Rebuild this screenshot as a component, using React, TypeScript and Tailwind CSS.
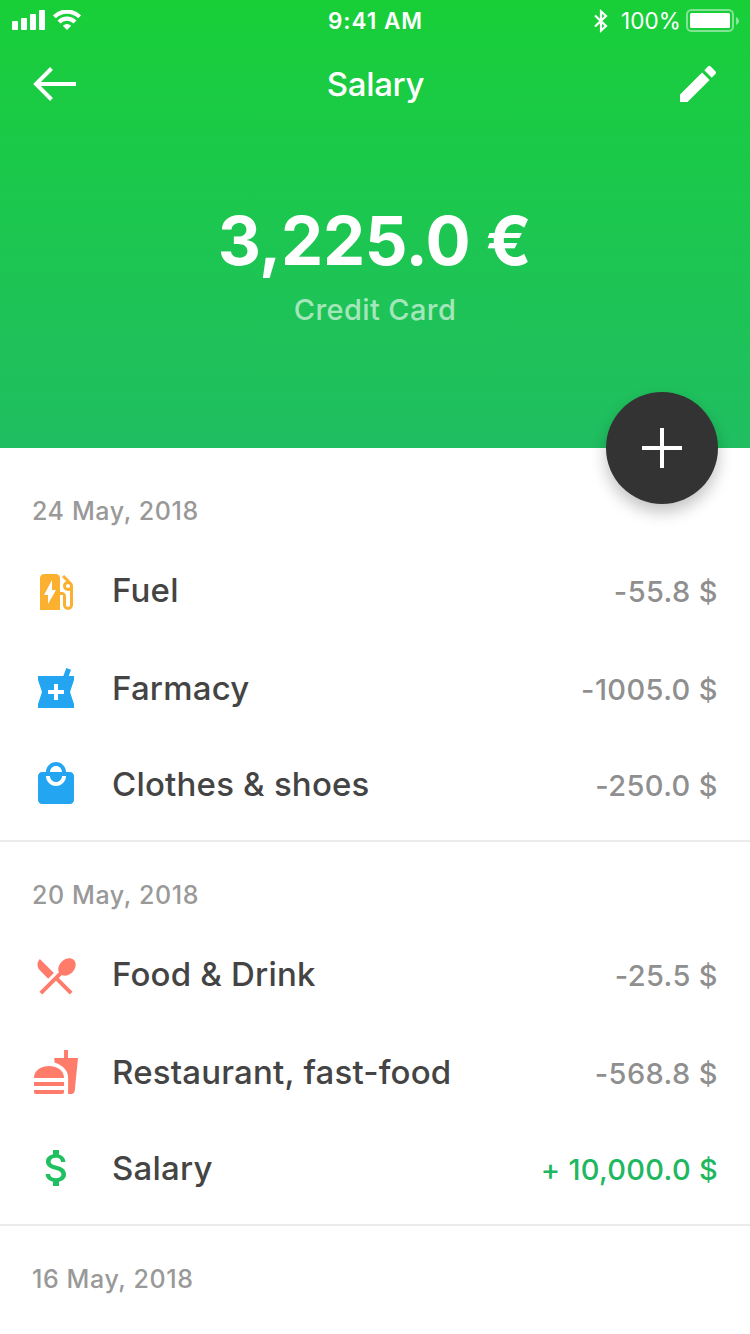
import type { ReactNode } from 'react';
import {
  MdAttachMoney,
  MdEdit,
  MdEvStation,
  MdFastfood,
  MdLocalMall,
  MdLocalPharmacy,
  MdRestaurantMenu,
} from 'react-icons/md';
import clsx from 'clsx';

interface Transaction {
  label: string;
  amount: string;
  icon: ReactNode;
  color: string;
  income?: boolean;
}

interface DayGroup {
  date: string;
  items: Transaction[];
}

const groups: DayGroup[] = [
  {
    date: '24 May, 2018',
    items: [
      { label: 'Fuel', amount: '-55.8 $', icon: <MdEvStation size={48} />, color: 'text-[#fbb12f]' },
      { label: 'Farmacy', amount: '-1005.0 $', icon: <MdLocalPharmacy size={48} className="mt-1" />, color: 'text-[#23a5f1]' },
      { label: 'Clothes & shoes', amount: '-250.0 $', icon: <MdLocalMall size={48} />, color: 'text-[#23a5f1]' },
    ],
  },
  {
    date: '20 May, 2018',
    items: [
      { label: 'Food & Drink', amount: '-25.5 $', icon: <MdRestaurantMenu size={48} />, color: 'text-[#ff7c6b]' },
      { label: 'Restaurant, fast-food', amount: '-568.8 $', icon: <MdFastfood size={48} />, color: 'text-[#ff7c6b]' },
      { label: 'Salary', amount: '+ 10,000.0 $', icon: <MdAttachMoney size={48} className="ml-px" />, color: 'text-[#20c062]', income: true },
    ],
  },
  { date: '16 May, 2018', items: [] },
];

function StatusBar() {
  return (
    <div className="grid h-[41px] grid-cols-3 items-center pl-3 pr-[11px]">
      <div className="mb-[2px] flex items-center gap-[7px]">
        <svg width="34" height="20" viewBox="0 0 34 20" fill="currentColor">
          <rect x="0" y="11" width="6" height="9" rx="1" />
          <rect x="9" y="8" width="6" height="12" rx="1" />
          <rect x="18" y="4" width="6" height="16" rx="1" />
          <rect x="27" y="0" width="6" height="20" rx="1" />
        </svg>
        <svg width="28" height="20" viewBox="0 0 28 20" fill="none" stroke="currentColor" strokeWidth="4.2">
          <path d="M1.4 6.8a17.8 17.8 0 0 1 25.2 0" />
          <path d="M6 12a11.3 11.3 0 0 1 16 0" />
          <path d="M14 20l-4.2-4.3a6 6 0 0 1 8.4 0z" fill="currentColor" stroke="none" />
        </svg>
      </div>
      <span className="text-center text-[22.5px] font-semibold tracking-[1px]">9:41 AM</span>
      <div className="flex items-center justify-end">
        <svg className="mr-3" width="16" height="24" viewBox="0 0 16 24" fill="none" stroke="currentColor" strokeWidth="2.2">
          <path d="M2 6.500l11 10.500L8 21.500v-19L13 7 2 17.500" />
        </svg>
        <span className="mr-[5px] mt-px text-[22.5px] tracking-[0.1px]">100%</span>
        <svg width="53" height="24" viewBox="0 0 53 24">
          <rect x="1" y="1" width="46" height="21" rx="4.500" fill="none" stroke="currentColor" strokeWidth="2" opacity="0.45" />
          <rect x="4" y="4" width="40" height="15" rx="1.500" fill="currentColor" />
          <path d="M50 8c4 1.500 4 6.500 0 8z" fill="currentColor" opacity="0.5" />
        </svg>
      </div>
    </div>
  );
}

function Header() {
  return (
    <header className="relative h-[448px] bg-linear-to-b from-[#18cf37] to-[#20be61] text-white">
      <StatusBar />
      <nav className="flex h-[86px] items-center justify-between pl-8 pr-7">
        <svg width="48" height="48" viewBox="0 0 48 48" fill="none" stroke="currentColor" strokeWidth="4">
          <path d="M44 24H4M19.500 8.500L4 24l15.500 15.500" />
        </svg>
        <h1 className="mt-[2px] mr-[3px] text-[33px] font-medium tracking-[-0.3px]">Salary</h1>
        <MdEdit size={48} />
      </nav>

      <div className="flex flex-col items-center pt-[74px]">
        <div className="mr-px text-[67px] leading-[80px] font-bold tracking-[-0.4px]">3,225.0 €</div>
        <div className="mt-[11px] text-[29px] leading-[36px] font-medium tracking-[0.4px] text-white/60">Credit Card</div>
      </div>

      {/* floating add button, straddles the header edge */}
      <button className="absolute right-8 -bottom-14 flex size-28 items-center justify-center rounded-full bg-[#333333] shadow-[0_8px_16px_rgba(0,0,0,0.24)]">
        <svg width="40" height="40" viewBox="0 0 40 40" stroke="currentColor" strokeWidth="4">
          <path d="M20 0v40M0 20h40" />
        </svg>
      </button>
    </header>
  );
}

function TransactionRow({ item, first }: { item: Transaction; first: boolean }) {
  return (
    <li className="flex h-24 items-center">
      <span className={clsx('w-20', item.color)}>{item.icon}</span>
      <span
        className={clsx(
          'flex-1 text-[33px] font-medium tracking-[0.2px] text-[#444444]',
          first ? '-mt-[2px]' : 'mt-[2px]',
          item.label.length < 8 && 'tracking-[-0.1px]',
        )}
      >
        {item.label}
      </span>
      <span
        className={clsx(
          'text-[29px] font-medium',
          first ? 'mt-0' : 'mt-1',
          item.income ? 'tracking-[0.3px] text-[#20b760]' : 'tracking-[0.4px] text-[#8f8f8f]',
        )}
      >
        {item.amount}
      </span>
    </li>
  );
}

function DaySection({ group }: { group: DayGroup }) {
  return (
    <section className="h-96 border-b-2 border-[#ebebeb] px-8">
      <h2 className="h-[86px] pt-[33px] text-[25px] leading-[40px] font-medium tracking-[0.6px] text-[#999999]">
        {group.date}
      </h2>
      <ul>
        {group.items.map((item, i) => (
          <TransactionRow key={item.label} item={item} first={i === 0} />
        ))}
      </ul>
    </section>
  );
}

export default function App() {
  return (
    <div className="h-[1334px] w-[750px] overflow-hidden bg-white font-[Inter,sans-serif]">
      <Header />
      <main className="pt-[10px]">
        {groups.map(g => <DaySection key={g.date} group={g} />)}
      </main>
    </div>
  );
}
